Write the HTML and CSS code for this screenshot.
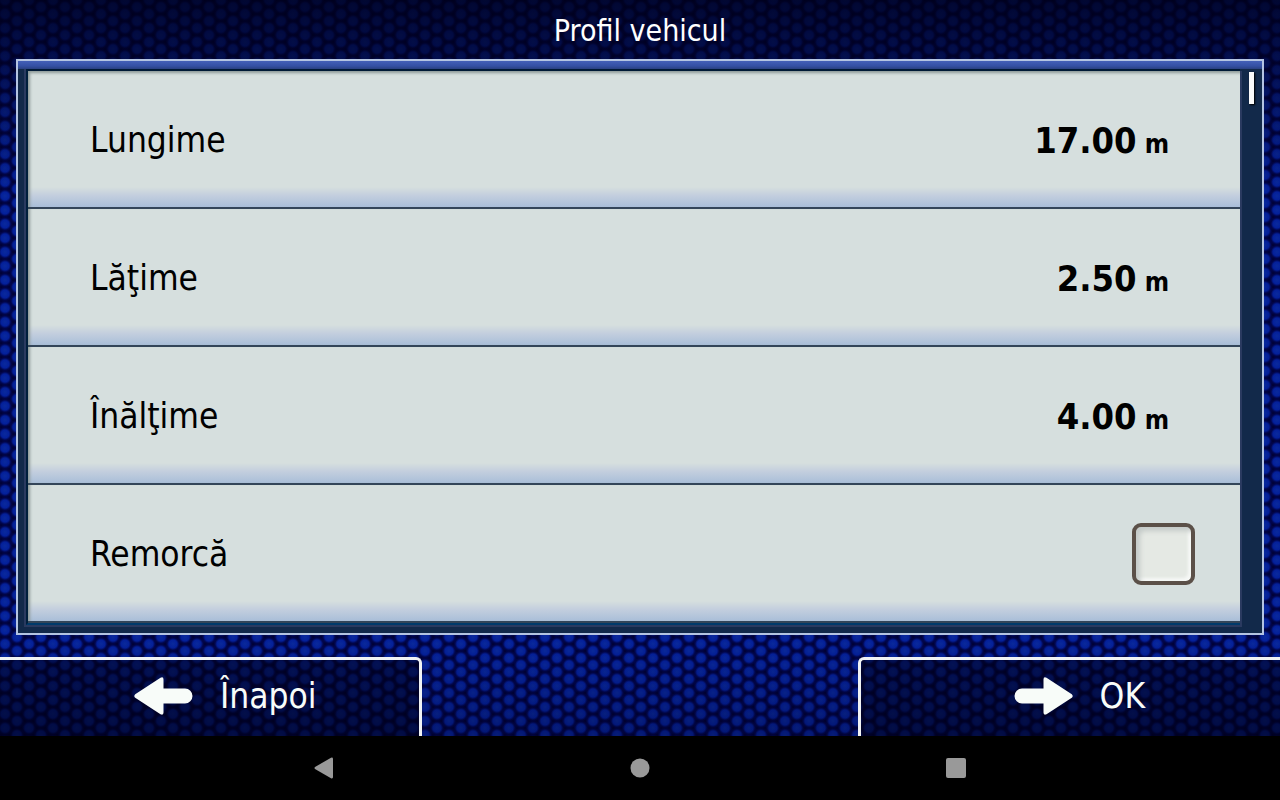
FILE: index.html
```
<!DOCTYPE html>
<html lang="ro">
<head>
    <meta charset="UTF-8">
    <meta name="viewport" content="width=device-width, initial-scale=1.0">
    <title>Profil vehicul</title>
    <link rel="stylesheet" href="styles.css">
</head>
<body>
    <div class="app">
        <header class="title-bar">
            <h1>Profil vehicul</h1>
        </header>

        <main class="panel">
            <ul class="settings">
                <li>
                    <button type="button" class="row">
                        <span>Lungime</span>
                        <span class="value">17.00 <small>m</small></span>
                    </button>
                </li>
                <li>
                    <button type="button" class="row">
                        <span>Lăţime</span>
                        <span class="value">2.50 <small>m</small></span>
                    </button>
                </li>
                <li>
                    <button type="button" class="row">
                        <span>Înălţime</span>
                        <span class="value">4.00 <small>m</small></span>
                    </button>
                </li>
                <li>
                    <label class="row" for="trailer">
                        <span>Remorcă</span>
                        <input type="checkbox" id="trailer" class="checkbox">
                    </label>
                </li>
            </ul>
            <div class="scrollbar">
                <div class="scroll-thumb"></div>
            </div>
        </main>

        <footer class="actions">
            <button type="button" class="action back">
                <svg width="59" height="38" viewBox="0 0 59 38" aria-hidden="true">
                    <path d="M1.2 17.2 L26.5 0.8 Q29.5 -0.6 29.5 2.5 V11.5 H51 A7.5 7.5 0 0 1 51 26.5 H29.5 V35.5 Q29.5 38.6 26.5 37.2 L1.2 20.8 Q-0.6 19 1.2 17.2 Z"/>
                </svg>
                <span>Înapoi</span>
            </button>
            <button type="button" class="action ok">
                <svg width="59" height="38" viewBox="0 0 59 38" aria-hidden="true">
                    <path d="M57.8 17.2 L32.5 0.8 Q29.5 -0.6 29.5 2.5 V11.5 H8 A7.5 7.5 0 0 0 8 26.5 H29.5 V35.5 Q29.5 38.6 32.5 37.2 L57.8 20.8 Q59.6 19 57.8 17.2 Z"/>
                </svg>
                <span>OK</span>
            </button>
        </footer>
    </div>

    <nav class="system-nav">
        <button type="button" aria-label="Back">
            <svg width="20" height="22" viewBox="0 0 20 22"><path d="M1 10 L17 0.7 Q19 0 19 2 V20 Q19 22 17 21.3 L1 12 Q0 11 1 10 Z"/></svg>
        </button>
        <button type="button" aria-label="Home">
            <svg width="20" height="20" viewBox="0 0 20 20"><circle cx="10" cy="10" r="9.5"/></svg>
        </button>
        <button type="button" aria-label="Recents">
            <svg width="20" height="20" viewBox="0 0 20 20"><rect width="20" height="20" rx="2"/></svg>
        </button>
    </nav>
</body>
</html>
```
FILE: styles.css
```
* {
    margin: 0;
    padding: 0;
    box-sizing: border-box;
}

body {
    display: flex;
    flex-direction: column;
    min-height: 100vh;
    background: #000;
    font-family: "DejaVu Sans Condensed", "Noto Sans", sans-serif;
    color: #000;
}

button {
    border: none;
    background: none;
    font: inherit;
    color: inherit;
    cursor: pointer;
}

/* blue mesh, darker towards the top */
.app {
    flex: 1;
    display: flex;
    flex-direction: column;
    background:
        linear-gradient(rgba(0, 0, 24, 0.8) 0, rgba(0, 0, 28, 0.6) 60px, rgba(0, 0, 30, 0) 190px, rgba(0, 0, 30, 0) 640px, rgba(0, 0, 30, 0.3) 100%),
        radial-gradient(circle, #0a2a9c 0, #04209a 4px, rgba(2, 10, 100, 0.6) 6px, transparent 8px) -7px 7px / 24px 14px,
        radial-gradient(circle, #0a2a9c 0, #04209a 4px, rgba(2, 10, 100, 0.6) 6px, transparent 8px) 5px 0 / 24px 14px,
        #000030;
}

.title-bar {
    height: 59px;
    padding-top: 2px;
    display: flex;
    align-items: center;
    justify-content: center;
}

.title-bar h1 {
    font-size: 30px;
    font-weight: normal;
    color: #fff;
}

.panel {
    flex: 1;
    display: flex;
    margin: 0 16px 22px;
    padding: 8px 0 6px 6px;
    border: 2px solid #b4c4e2;
    background: linear-gradient(#4460b8, #3450a4 5px, #2a4080 8px, #12294a 8px);
}

.settings {
    flex: 1;
    display: flex;
    flex-direction: column;
    list-style: none;
    border-top: 2px solid #001a36;
    border-left: 2px solid #001f3d;
    border-bottom: 2px solid #003a6b;
    box-shadow: -2px 0 #2a3a60, 2px 2px #2a3a60, -2px 2px #2a3a60;
    margin: 0 0 2px 2px;
}

.settings li {
    flex: 1;
    display: flex;
    box-shadow: inset 4px 0 3px -2px #8d9a98;
    background: linear-gradient(to top, #a9bed8, #c4cfde 12px, #d6dfde 20px);
    border-bottom: 2px solid #334559;
}

.settings li:first-child {
    box-shadow: inset 4px 4px 3px -2px #8d9a98;
}

.row {
    flex: 1;
    display: flex;
    align-items: center;
    justify-content: space-between;
    padding: 2px 45px 0 62px;
    font-size: 35px;
    cursor: pointer;
}

.value {
    display: flex;
    align-items: baseline;
    gap: 8px;
    margin-right: 26px;
    font-size: 36px;
    font-weight: bold;
}

.value small {
    font-size: 26px;
}

.checkbox {
    appearance: none;
    width: 63px;
    height: 62px;
    border: 4px solid #5b5048;
    border-radius: 9px;
    background: #e5e9e4;
    box-shadow: inset 4px 4px 5px #c4cac8, inset -3px -3px 3px #f6f8f6;
    cursor: pointer;
}

.checkbox:checked {
    background: #2a4590;
}

.scrollbar {
    width: 22px;
    padding: 3px 0 0 9px;
}

.scroll-thumb {
    width: 5px;
    height: 32px;
    background: #fafafa;
    box-shadow: 1px 1px 2px #000;
}

.actions {
    display: flex;
    justify-content: space-between;
}

.action {
    width: 33%;
    height: 79px;
    display: flex;
    align-items: center;
    gap: 27px;
    padding-bottom: 4px;
    border-top: 3px solid #f0f2f4;
    background: rgba(0, 0, 20, 0.5);
    color: #f8fcf9;
    font-size: 35px;
}

.action svg {
    fill: #f8fcf9;
}

.back {
    padding-left: 134px;
    border-right: 3px solid #f0f2f4;
    border-top-right-radius: 6px;
}

.ok {
    padding-left: 153px;
    border-left: 3px solid #f0f2f4;
    border-top-left-radius: 6px;
}

.system-nav {
    height: 64px;
    display: flex;
    align-items: center;
    justify-content: space-around;
    width: 74%;
    margin: 0 auto;
}

.system-nav svg {
    display: block;
    fill: #999;
}
```
